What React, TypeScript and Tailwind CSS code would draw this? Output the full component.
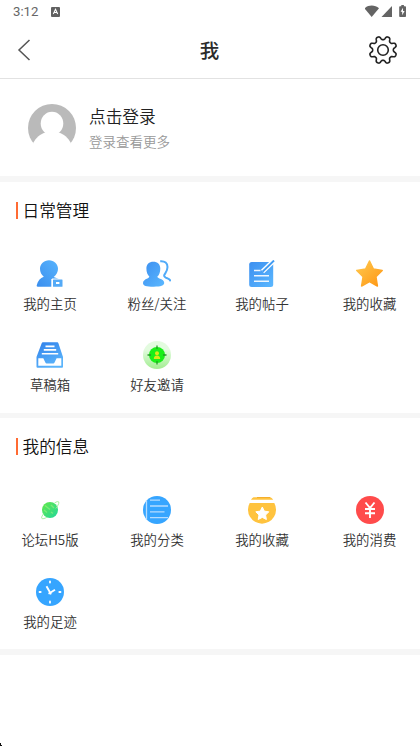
import React from 'react';

interface MenuItem {
  label: string;
  icon: React.ReactNode;
}

const HomeIcon = () => (
  <svg width="28" height="28" viewBox="0 0 28 28">
    <defs>
      <linearGradient id="home-fill" x1="0" y1="1" x2="1" y2="0">
        <stop offset="0" stopColor="#3a8eee" />
        <stop offset="1" stopColor="#58b4fd" />
      </linearGradient>
    </defs>
    <path
      fill="url(#home-fill)"
      d="M13 0.2c5 0 9 3.8 9 8.6 0 3.200-1.500 6-4.300 8.200 2 .5 3.700 1.200 5 2.100H15.300v7.600H1.800c-1 0-1.300-.7-1-1.700 1-4 3.400-6.900 7-8.200C5.300 14.800 4 12 4 8.800 4 4 8 .2 13 .2z"
    />
    <rect x="16" y="18.500" width="11" height="9" fill="#fff" />
    <rect x="17" y="19.500" width="9.500" height="7.200" rx="0.500" fill="#54aaf7" />
    <rect x="20" y="22" width="3.400" height="2" fill="#fff" />
  </svg>
);

const FansIcon = () => (
  <svg width="28" height="28" viewBox="0 0 28 28">
    <defs>
      <linearGradient id="fans-fill" x1="0" y1="0" x2="1" y2="1">
        <stop offset="0" stopColor="#3c8ff0" />
        <stop offset="1" stopColor="#5bb8ff" />
      </linearGradient>
    </defs>
    <path
      fill="url(#fans-fill)"
      d="M10.300 1.800c4.200 0 7 2.600 7 6.600 0 3.300-1 6.500-2.900 8.200 0 1 .7 1.300 2 1.800 3.100 1.100 4.800 2.400 4.800 4.400 0 2.900-3.200 3.900-10.500 3.900C3.200 26.700 0 25.700 0 22.900c0-2.100 1.700-3.400 4.400-4.500 1.300-.5 1.900-.9 1.900-1.800C4.400 14.800 3.400 11.700 3.400 8.400c0-4 2.700-6.600 6.900-6.600z"
    />
    <path
      fill="none"
      stroke="#50abf9"
      strokeWidth="2"
      d="M17.200 1.200c4.800-.4 7.300 2 7.300 5.800 0 4-1.800 5.600-3 7.600-.7 1.200-.3 2.100 1.300 3 2.700 1.400 4.500 1.600 4.700 3.700"
    />
  </svg>
);

const PostIcon = () => (
  <svg width="28" height="28" viewBox="0 0 28 28">
    <defs>
      <linearGradient id="post-fill" x1="0" y1="0" x2="1" y2="1">
        <stop offset="0" stopColor="#3c8ff0" />
        <stop offset="1" stopColor="#5bb8ff" />
      </linearGradient>
    </defs>
    <rect x="1.200" y="2" width="24" height="25" rx="2.500" fill="url(#post-fill)" />
    <path d="M26 0.500 14.500 11.500" stroke="#fff" strokeWidth="4.500" />
    <path d="M26 0.500 14.500 11.700" stroke="#419cf3" strokeWidth="1.900" />
    <path d="M6 10.500h6.500M6 15.800h15M6 21.200h15" stroke="#fff" strokeOpacity="0.900" strokeWidth="1.600" />
  </svg>
);

const StarIcon = () => (
  <svg width="28" height="28" viewBox="0 0 28 28">
    <defs>
      <linearGradient id="star-fill" x1="0" y1="0" x2="1" y2="1">
        <stop offset="0" stopColor="#ffc94e" />
        <stop offset="1" stopColor="#ff9613" />
      </linearGradient>
    </defs>
    <path
      fill="url(#star-fill)"
      stroke="url(#star-fill)"
      strokeWidth="1.500"
      strokeLinejoin="round"
      d="m13.500 1 3.900 8 8.800 1.400-6.300 6.200 1.500 9.400-7.900-4.300L5.600 26l1.500-9.400L0.800 10.400 9.600 9z"
    />
  </svg>
);

const DraftIcon = () => (
  <svg width="28" height="28" viewBox="0 0 28 28">
    <defs>
      <linearGradient id="draft-fill" x1="0" y1="0" x2="0.500" y2="1">
        <stop offset="0" stopColor="#2f80ea" />
        <stop offset="1" stopColor="#5bb4fb" />
      </linearGradient>
    </defs>
    <path fill="url(#draft-fill)" d="M7 1.300h14c.8 0 1.200.4 1.500 1.100L27 16v9.800c0 .6-.3.900-.9.900H1.400c-.6 0-.9-.3-.9-.9V16L5.600 2.400c.3-.7.7-1.100 1.400-1.100z" />
    <path d="M9.500 5.400h9M7.800 8.900h12.400M5.800 12.800h16.400" stroke="#fff" strokeWidth="1.600" />
    <path fill="#fff" d="M2.300 17.200h5l2.200 4.500c.2.500.5.700 1 .7h6.900c.5 0 .8-.2 1-.7l2.200-4.500h4.700v7.600h-23z" />
  </svg>
);

const InviteIcon = () => (
  <svg width="28" height="28" viewBox="0 0 28 28">
    <defs>
      <linearGradient id="invite-fill" x1="0" y1="0" x2="0" y2="1">
        <stop offset="0.300" stopColor="#e3fbdf" />
        <stop offset="1" stopColor="#a2ed91" />
      </linearGradient>
    </defs>
    <circle cx="14" cy="14" r="14" fill="url(#invite-fill)" />
    <circle cx="14" cy="14" r="8" fill="#19ef19" />
    <path d="M14 4.500V8M14 20v3.500M4.500 14H8M20 14h3.500" stroke="#279a27" strokeWidth="1.300" />
    <circle cx="14" cy="12.300" r="2" fill="#dce51c" />
    <path d="M10.800 18c0-2 1-3.400 3.200-3.400s3.200 1.400 3.200 3.400z" fill="#dce51c" />
  </svg>
);

const PlanetIcon = () => (
  <svg width="28" height="28" viewBox="0 0 28 28">
    <defs>
      <linearGradient id="planet-fill" x1="0" y1="0" x2="1" y2="1">
        <stop offset="0" stopColor="#62e848" />
        <stop offset="1" stopColor="#22d89c" />
      </linearGradient>
    </defs>
    <circle cx="14" cy="14" r="8" fill="url(#planet-fill)" />
    <path d="m9 9.500 5 4M15 9l3 3M8 14l3 2.500M15 16l2 1.500" stroke="#a3f383" strokeWidth="1.400" opacity="0.550" />
    <path
      fill="none"
      stroke="#9dee92"
      strokeWidth="0.900"
      d="M18.500 7c2.200-1.500 4-1.800 4.300-1 .5 1.500-1.500 4.500-3 6.500M7.800 17.500c-1.800 2.300-2.500 4-2 4.800.8.900 3 .2 5-1"
    />
  </svg>
);

const CategoryIcon = () => (
  <svg width="28" height="28" viewBox="0 0 28 28">
    <circle cx="14" cy="14" r="14" fill="#36a5ff" />
    <path d="M3.500 4.200v19.600" stroke="#b5dcff" strokeWidth="1.300" />
    <path d="M7 4.200h10M7 10h18M7 15.800h14.500M7 21.600h18" stroke="#b5dcff" strokeWidth="1.300" />
  </svg>
);

const CollectionIcon = () => (
  <svg width="28" height="28" viewBox="0 0 28 28">
    <path d="M5.500 1.200h17c1 .5 2 1.400 2.700 2.500H3c.6-1 1.500-1.900 2.500-2.500z" fill="#ffc33e" />
    <path d="M9 1.500h13" stroke="#f5ae2c" strokeWidth="1" />
    <path d="M1.700 7h24.600A14 14 0 1 1 1.700 7z" fill="#ffc33e" />
    <path
      fill="#fff"
      stroke="#fff"
      strokeLinejoin="round"
      d="m14.300 11 2 4.100 4.500.7-3.200 3.200.8 4.500-4.100-2.100-4.100 2.100.8-4.500-3.200-3.200 4.500-.7z"
    />
  </svg>
);

const SpendIcon = () => (
  <svg width="28" height="28" viewBox="0 0 28 28">
    <circle cx="14" cy="14" r="14" fill="#ff4b4b" />
    <path d="m9.500 6.500 4.500 5.500 4.500-5.500M14 12v10M9 13h10M9 17.300h10" fill="none" stroke="#fff" strokeWidth="1.900" />
  </svg>
);

const HistoryIcon = () => (
  <svg width="28" height="28" viewBox="0 0 28 28">
    <circle cx="14" cy="14" r="14" fill="#36a5ff" />
    <path d="M14 3.300v1.200M14 23.500v1.200M3.500 14h1.200M23.300 14h1.200" stroke="#fff" strokeWidth="1.800" strokeLinecap="round" />
    <path d="m10.500 8.300 3.700 6.400 4.800-3M14.200 14.700l-1.700 1M14.200 14.700l.8 1.600" fill="none" stroke="#fff" strokeWidth="1.900" />
  </svg>
);

// eight rounded teeth, sampled around the circle
const gearPath =
  Array.from({ length: 160 }, (_, i) => {
    const angle = (i / 160) * Math.PI * 2;
    const r = 12.1 - 1.75 * Math.tanh(1.8 * Math.cos(angle * 8)) / Math.tanh(1.8);
    const x = 15 + r * Math.cos(angle);
    const y = 15 + r * Math.sin(angle);
    return `${i === 0 ? 'M' : 'L'}${x.toFixed(2)} ${y.toFixed(2)}`;
  }).join('') + 'Z';

const GearIcon = () => (
  <svg width="30" height="30" viewBox="0 0 30 30" fill="none" stroke="#222" strokeWidth="1.600" strokeLinejoin="round">
    <path d={gearPath} />
    <circle cx="15" cy="15" r="5.300" />
  </svg>
);

const dailyItems: MenuItem[] = [
  { label: '我的主页', icon: <HomeIcon /> },
  { label: '粉丝/关注', icon: <FansIcon /> },
  { label: '我的帖子', icon: <PostIcon /> },
  { label: '我的收藏', icon: <StarIcon /> },
  { label: '草稿箱', icon: <DraftIcon /> },
  { label: '好友邀请', icon: <InviteIcon /> },
];

const infoItems: MenuItem[] = [
  { label: '论坛H5版', icon: <PlanetIcon /> },
  { label: '我的分类', icon: <CategoryIcon /> },
  { label: '我的收藏', icon: <CollectionIcon /> },
  { label: '我的消费', icon: <SpendIcon /> },
  { label: '我的足迹', icon: <HistoryIcon /> },
];

const StatusBar = () => (
  <div className="flex h-6 items-center justify-between px-[13px] pb-px text-[#666]">
    <div className="flex items-center gap-[13px]">
      <span className="font-['Roboto',sans-serif] text-[13.200px] leading-[23px]">3:12</span>
      <svg width="9" height="10" viewBox="0 0 9 10">
        <rect width="9" height="10" rx="1" fill="#616161" />
        <path d="m2.300 7 2.200-4.800L6.700 7M3.200 5.500h2.600" fill="none" stroke="#fff" strokeWidth="1.100" />
      </svg>
    </div>
    <svg width="42" height="13" viewBox="0 0 42 13" fill="#646464">
      <path d="M-.5 3.300C3.500-.3 10-.3 14 3.300L6.700 12z" />
      <path d="M27 1v11H16.500z" />
      <path d="M36.300 0h2.600v1.200h1.300c.5 0 .8.300.8.800v9.200c0 .5-.3.800-.8.800H35c-.5 0-.8-.3-.8-.8V2c0-.5.300-.8.800-.8h1.300z" />
      <path d="m38 2.800-2.400 4h1.600v3.500l2.400-4.200H38z" fill="#fff" />
    </svg>
  </div>
);

const MenuSection: React.FC<{ title: string; items: MenuItem[] }> = ({ title, items }) => (
  <section>
    <div className="h-[230.800px] overflow-hidden pt-4">
      <div className="flex h-6 items-center gap-[4.500px] pl-4">
        <span className="h-[17px] w-[2px] bg-[#ff6b33]" />
        <h2 className="text-[16.700px] font-[350] leading-6 text-[#111]">{title}</h2>
      </div>
      <div className="-ml-[3px] mt-[38px] grid grid-cols-[106px_108px_102px_113px]">
        {items.map((item) => (
          <div key={item.label} className="flex h-[81.300px] flex-col items-center">
            {item.icon}
            <span className="mt-[5px] whitespace-nowrap text-[13.400px] font-[350] leading-5 text-[#333]">
              {item.label}
            </span>
          </div>
        ))}
      </div>
    </div>
    <div className="h-[5.500px] bg-[#f6f6f6]" />
  </section>
);

const App: React.FC = () => {
  return (
    <div className="flex h-[746px] w-[420px] flex-col overflow-hidden bg-white font-['Noto_Sans_CJK_SC',sans-serif]">
      <StatusBar />

      <header className="grid h-[55px] grid-cols-[1fr_auto_1fr] items-center border-b border-[#e2e2e2] pb-[2px] pl-[17px] pr-[18px]">
        <svg width="30" height="22" viewBox="0 0 30 22" fill="none" stroke="#555" strokeWidth="1.500">
          <path d="M12.500 1 2 11l10.500 10" />
        </svg>
        <h1 className="text-[19.500px] font-medium leading-7 text-[#2b2b2b]">我</h1>
        <div className="flex justify-end pr-[4.500px]">
          <GearIcon />
        </div>
      </header>

      <div className="flex h-[97px] items-center pl-7">
        <svg width="48" height="48" viewBox="0 0 48 48">
          <circle cx="24" cy="24" r="24" fill="#bababa" />
          <ellipse cx="24" cy="19.500" rx="11.300" ry="11.700" fill="#fff" />
          <path d="M5.300 38.800c2.700-4.800 6.700-8.800 12.700-10.500h12c6 1.700 10 5.700 12.700 10.500V48H5.300z" fill="#fff" />
        </svg>
        <div className="ml-[13px] flex flex-col pt-px">
          <span className="text-[16.700px] font-[350] leading-[26px] text-[#222]">点击登录</span>
          <span className="text-[13.500px] font-[350] leading-[25px] text-[#999]">登录查看更多</span>
        </div>
      </div>
      <div className="h-[6px] bg-[#f6f6f6]" />

      <MenuSection title="日常管理" items={dailyItems} />
      <MenuSection title="我的信息" items={infoItems} />

      <svg className="mt-auto" width="2" height="3" viewBox="0 0 2 3">
        <path d="M0 0h1v2h1v1H0z" fill="#111" />
      </svg>
    </div>
  );
};

export default App;
